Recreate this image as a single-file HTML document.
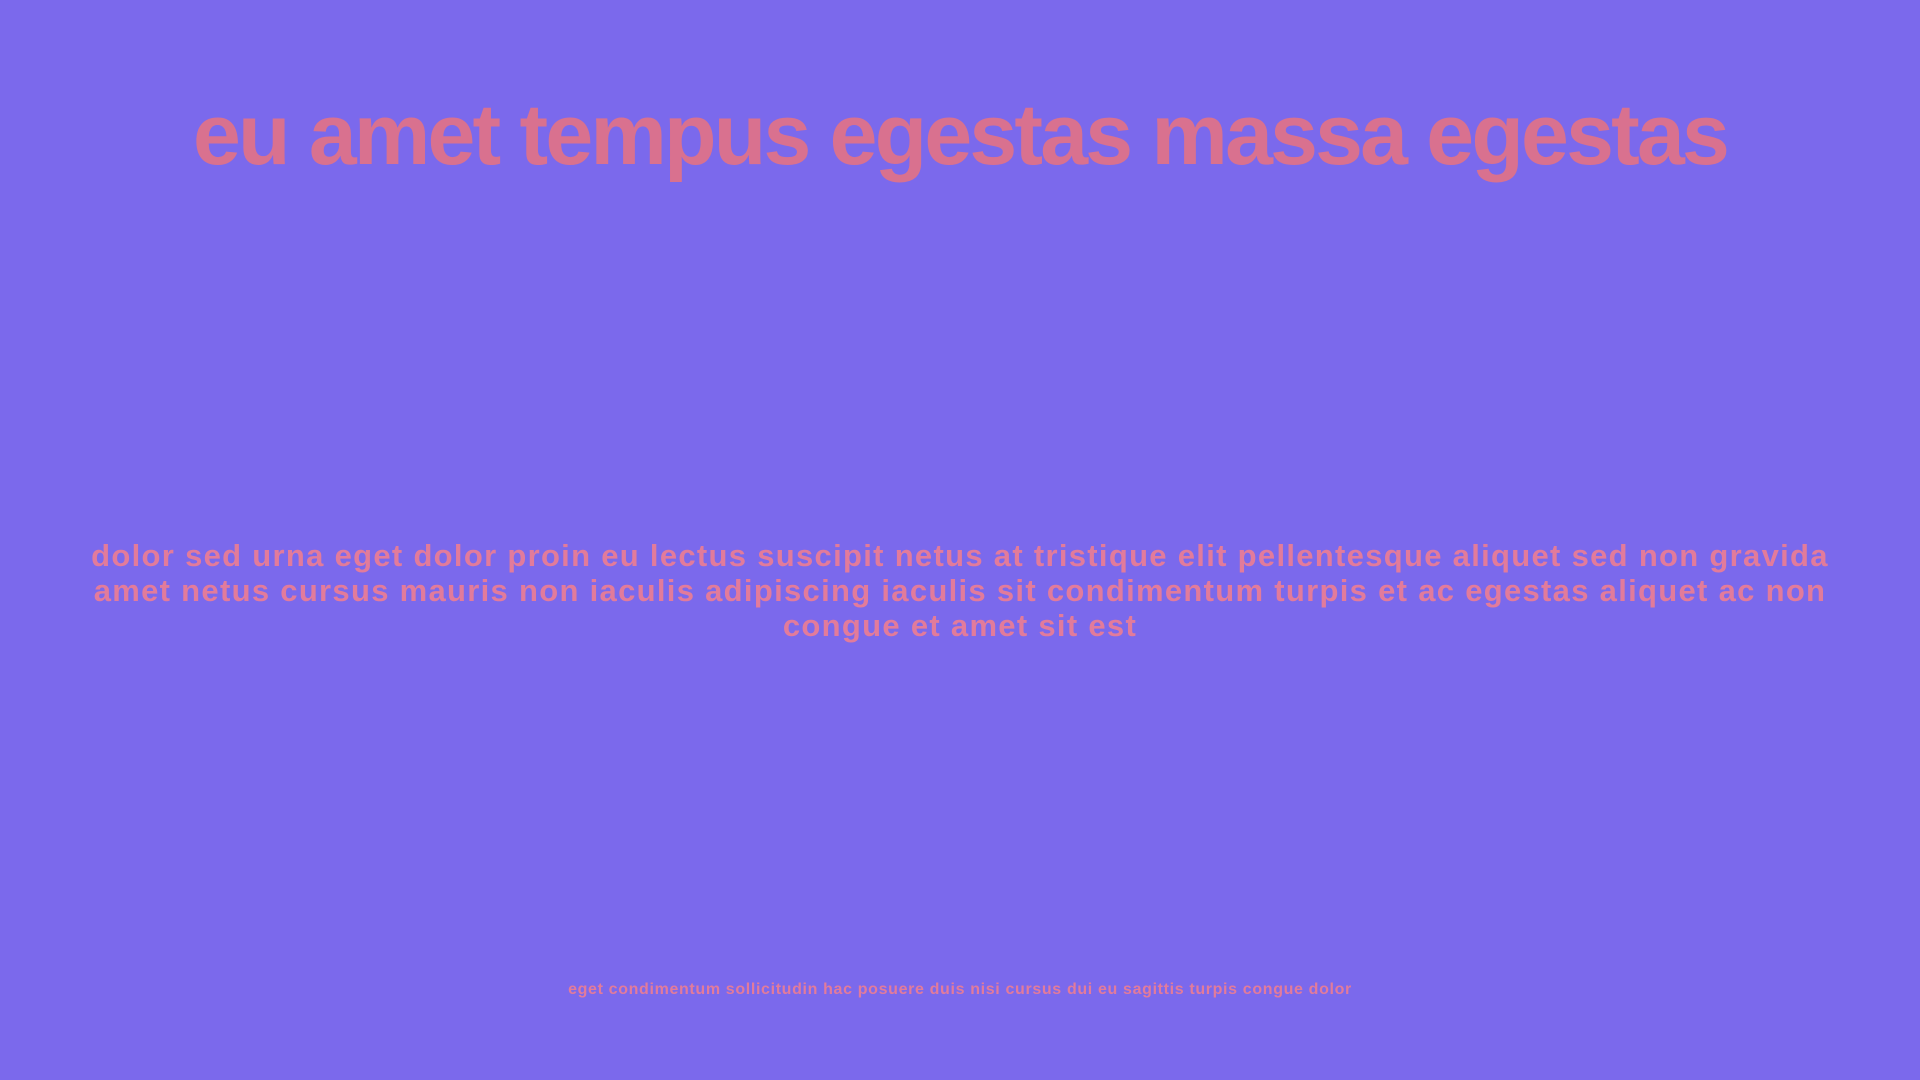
<!DOCTYPE html>
<html><head><meta charset="utf-8"><style>
html,body{margin:0;padding:0;width:1920px;height:1080px;background:#7b69ec;overflow:hidden}
body{font-family:"Liberation Sans",Arial,sans-serif;font-weight:bold;position:relative}
.l{position:absolute;left:0;width:1920px;text-align:center;white-space:nowrap}
.t{top:85px;font-size:86px;line-height:100px;letter-spacing:-2.8px;color:#d9718f}
.p{font-size:31px;line-height:35px;letter-spacing:1.3px;color:#e27b9b}
.f{top:980px;font-size:16px;line-height:20px;letter-spacing:0.65px;color:#e27b9b}
</style></head><body>
<div class="l t">eu amet tempus egestas massa egestas</div>
<div class="l p" style="top:538px">dolor sed urna eget dolor proin eu lectus suscipit netus at tristique elit pellentesque aliquet sed non gravida</div>
<div class="l p" style="top:573px">amet netus cursus mauris non iaculis adipiscing iaculis sit condimentum turpis et ac egestas aliquet ac non</div>
<div class="l p" style="top:608px">congue et amet sit est</div>
<div class="l f">eget condimentum sollicitudin hac posuere duis nisi cursus dui eu sagittis turpis congue dolor</div>
</body></html>
